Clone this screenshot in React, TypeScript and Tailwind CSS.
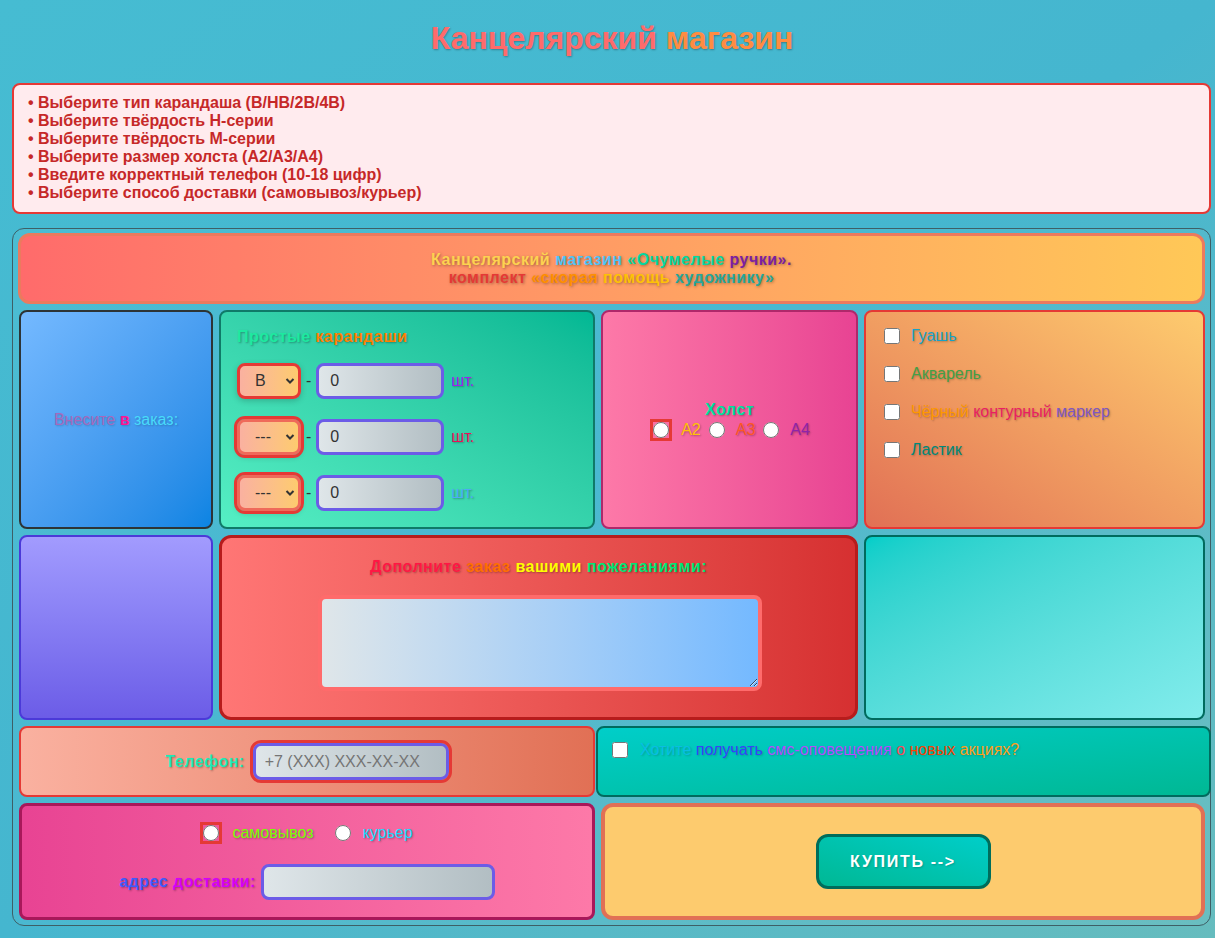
import React from 'react';

const shadow = '[text-shadow:1px_1px_2px_rgba(0,0,0,0.3)]';

const errors = [
  'Выберите тип карандаша (B/HB/2B/4B)',
  'Выберите твёрдость H-серии',
  'Выберите твёрдость M-серии',
  'Выберите размер холста (A2/A3/A4)',
  'Введите корректный телефон (10-18 цифр)',
  'Выберите способ доставки (самовывоз/курьер)',
];

function Pencil({ value, invalid, unitColor }: { value: string; invalid?: boolean; unitColor: string }) {
  return (
    <div className="flex items-center">
      <div className="relative">
        <select
          defaultValue={value}
          className={`appearance-none w-[64px] h-[36px] pl-[15px] text-[16px] text-[#333] rounded-lg border-[3px] bg-linear-to-r from-[#fab1a0] to-[#fdcb6e] shadow-[0_2px_6px_rgba(0,0,0,0.2)] ${
            invalid ? 'border-[#ef6a5a] outline-[3px] outline-solid outline-[#e53935]' : 'border-[#e53935]'
          }`}
        >
          <option value="---">---</option>
          <option value="B">B</option>
          <option value="HB">HB</option>
          <option value="2B">2B</option>
          <option value="4B">4B</option>
        </select>
        <svg className="absolute right-[6px] top-[13px] pointer-events-none" width="10" height="10" viewBox="0 0 10 10">
          <path d="M1.5 3 L5 6.5 L8.5 3" fill="none" stroke="#333" strokeWidth="2" />
        </svg>
      </div>
      <span className="mx-[5px] text-[#333]">-</span>
      <input
        defaultValue="0"
        className="w-[128px] h-[36px] pl-[11px] text-[16px] text-[#333] rounded-lg border-[3px] border-[#6c5ce7] bg-linear-to-r from-[#dfe6e9] to-[#b2bec3] outline-none"
      />
      <span className={`ml-[7px] ${shadow}`} style={{ color: unitColor }}>
        шт.
      </span>
    </div>
  );
}

function Radio({ boxed }: { boxed?: boolean }) {
  return (
    <input
      type="radio"
      name={boxed ? 'boxed' : undefined}
      className={`w-4 h-4 m-0 ${boxed ? 'outline-[3px] outline-solid outline-[#e53935]' : ''}`}
    />
  );
}

export default function App() {
  return (
    <div
      className="min-h-screen bg-linear-to-br from-[#46bcd2] via-[#45b6cf] to-[#66bcbe] pt-[19px] pb-[12px]"
      style={{ fontFamily: '"Liberation Sans", Arial, sans-serif' }}
    >
      <h1 className={`text-center pl-[9px] text-[32px] leading-[38px] font-bold ${shadow}`}>
        <span className="text-[#ff6b6b]">Канцелярский</span> <span className="text-[#ff8c42]">магазин</span>
      </h1>

      <div className="ml-[12px] mr-[4px] mt-[26px] rounded-lg border-2 border-[#e53935] bg-[#ffebee] pl-[14px] pt-[9px] pb-[10px] text-[16px] leading-[18px] font-bold text-[#c62828]">
        {errors.map((e) => (
          <div key={e}>• {e}</div>
        ))}
      </div>

      <div className="ml-[12px] mr-[4px] mt-[14px] rounded-xl border border-[#3e5f66] bg-white/[0.03] pl-[6px] pt-[4px] pb-[5px]">
        <div className="-ml-px w-[1187px] h-[71px] rounded-xl border-[3px] border-[#eb7a5e] bg-linear-to-r from-[#ff6b6b] to-[#ffc857] flex flex-col items-center justify-center text-[16px] leading-[18px] font-bold tracking-[0.5px] [text-shadow:1px_1px_3px_rgba(0,0,0,0.35)]">
          <div>
            <span className="text-[#fdd250]">Канцелярский</span> <span className="text-[#4fc3f7]">магазин</span>{' '}
            <span className="text-[#06d6a0]">«Очумелые</span> <span className="text-[#7b1fa2]">ручки»</span>
            <span className="text-[#7b1fa2]">.</span>
          </div>
          <div>
            <span className="text-[#e53935]">комплект</span> <span className="text-[#ff8f00]">«скорая</span>{' '}
            <span className="text-[#ffc107]">помощь</span> <span className="text-[#26a69a]">художнику»</span>
          </div>
        </div>

        <div className="mt-[6px] grid grid-cols-[194px_376px_257px_341px] grid-rows-[219px_185px_71px_117px] gap-[6px] text-[16px] leading-[18px]">
          {/* row 1 */}
          <div className="rounded-lg border-2 border-[#2d3436] bg-linear-to-br from-[#74b9ff] to-[#0984e3] flex items-center justify-center [text-shadow:1px_1px_2px_rgba(0,0,0,0.2)]">
            <span>
              <span className="text-[#a569bd]">Внесите</span> <span className="text-[#ff1493] font-bold">в</span>{' '}
              <span className="text-[#48dbfb]">заказ:</span>
            </span>
          </div>

          <div className="rounded-lg border-2 border-[#0f7a68] bg-linear-to-tr from-[#55efc4] to-[#00b894] pt-[16px] pl-[16px]">
            <div className={`font-bold tracking-[0.5px] ${shadow}`}>
              <span className="text-[#1de9a0]">Простые</span> <span className="text-[#ff7f00]">карандаши</span>
            </div>
            <div className="mt-[17px] flex flex-col gap-[20px]">
              <Pencil value="B" unitColor="#a020f0" />
              <Pencil value="---" invalid unitColor="#e9105a" />
              <Pencil value="---" invalid unitColor="#4fa8f7" />
            </div>
          </div>

          <div className="rounded-lg border-2 border-[#b0286a] bg-linear-to-r from-[#fd79a8] to-[#e84393] flex flex-col items-center justify-center">
            <div className={`font-bold tracking-[0.5px] text-[#00e0a0] ${shadow}`}>Холст</div>
            <div className={`mt-[2px] ml-[4px] flex items-center ${shadow}`}>
              <Radio boxed />
              <span className="ml-[12px] text-[#ffc107]">A2</span>
              <span className="ml-[8px] flex"><Radio /></span>
              <span className="ml-[11px] text-[#ff5722]">A3</span>
              <span className="ml-[8px] flex"><Radio /></span>
              <span className="ml-[11px] text-[#8e24aa]">A4</span>
            </div>
          </div>

          <div className="rounded-lg border-2 border-[#e53935] bg-linear-to-tr from-[#e17055] to-[#fdcb6e] pt-[15px] pl-[18px] flex flex-col gap-[20px] [text-shadow:1px_1px_2px_rgba(0,0,0,0.25)]">
            <label className="flex items-center gap-[11px]">
              <input type="checkbox" className="w-4 h-4 m-0" />
              <span className="text-[#17a2c8]">Гуашь</span>
            </label>
            <label className="flex items-center gap-[11px]">
              <input type="checkbox" className="w-4 h-4 m-0" />
              <span className="text-[#43a047]">Акварель</span>
            </label>
            <label className="flex items-center gap-[11px]">
              <input type="checkbox" className="w-4 h-4 m-0" />
              <span>
                <span className="text-[#ff9800]">Чёрный</span> <span className="text-[#e91e63]">контурный</span>{' '}
                <span className="text-[#7e57c2]">маркер</span>
              </span>
            </label>
            <label className="flex items-center gap-[11px]">
              <input type="checkbox" className="w-4 h-4 m-0" />
              <span className="text-[#00897b]">Ластик</span>
            </label>
          </div>

          {/* row 2 */}
          <div className="rounded-lg border-2 border-[#4b3ad8] bg-linear-to-b from-[#a29bfe] to-[#6c5ce7]" />

          <div className="col-span-2 rounded-xl border-[3px] border-[#b71c1c] bg-linear-to-r from-[#ff7675] to-[#d63031] flex flex-col items-center pt-[20px]">
            <div className={`font-bold tracking-[0.5px] ${shadow}`}>
              <span className="text-[#ff1744]">Дополните</span> <span className="text-[#ff6f00]">заказ</span>{' '}
              <span className="text-[#ffff00]">вашими</span> <span className="text-[#00e676]">пожеланиями:</span>
            </div>
            <textarea className="mt-[19px] ml-[2px] w-[444px] h-[96px] rounded-lg border-4 border-[#ff6b6b] bg-linear-to-r from-[#dfe6e9] to-[#74b9ff] outline-none" />
          </div>

          <div className="rounded-lg border-2 border-[#006b5e] bg-linear-to-br from-[#00cec9] to-[#81ecec]" />

          {/* row 3 */}
          <div className="col-span-2 rounded-lg border-2 border-[#e53935] bg-linear-to-r from-[#fab1a0] to-[#e17055] flex items-center justify-center gap-[8px]">
            <span className={`font-bold tracking-[0.5px] text-[#1de9b6] ${shadow}`}>Телефон:</span>
            <input
              placeholder="+7 (XXX) XXX-XX-XX"
              className="w-[196px] h-[37px] pl-[9px] text-[16px] rounded-lg border-[3px] border-[#6c5ce7] outline-[3px] outline-solid outline-[#e53935] bg-linear-to-r from-[#dfe6e9] to-[#b2bec3] placeholder:text-[#757575]"
            />
          </div>

          <div className="col-span-2 -ml-[5px] -mr-[6px] rounded-lg border-2 border-[#006b5e] bg-linear-to-br from-[#00cec9] to-[#00b894] pt-[13px] pl-[14px] flex items-start gap-[12px] [text-shadow:1px_1px_2px_rgba(0,0,0,0.2)]">
            <input type="checkbox" className="w-4 h-4 m-0 mt-[1px]" />
            <span>
              <span className="text-[#0abde3]">Хотите</span> <span className="text-[#3742fa]">получать</span>{' '}
              <span className="text-[#b44cff]">смс-оповещения</span> <span className="text-[#ff4757]">о</span>{' '}
              <span className="text-[#ff3f00]">новых</span> <span className="text-[#ff9f1a]">акциях?</span>
            </span>
          </div>

          {/* row 4 */}
          <div className="col-span-2 rounded-lg border-[3px] border-[#a8185a] bg-linear-to-r from-[#e84393] to-[#fd79a8] flex flex-col items-center justify-center gap-[21px]">
            <div className={`flex items-center mb-[1px] ml-[2px] ${shadow}`}>
              <Radio boxed />
              <span className="ml-[13px] text-[#76ff03]">самовывоз</span>
              <span className="ml-[21px] flex"><Radio /></span>
              <span className="ml-[12px] text-[#18dcff]">курьер</span>
            </div>
            <div className="flex items-center gap-[5px]">
              <span className={`font-bold tracking-[0.5px] ${shadow}`}>
                <span className="text-[#3d5afe]">адрес</span> <span className="text-[#d500f9]">доставки:</span>
              </span>
              <input className="w-[234px] h-[36px] rounded-lg border-[3px] border-[#6c5ce7] bg-linear-to-r from-[#dfe6e9] to-[#b2bec3] outline-none" />
            </div>
          </div>

          <div className="col-span-2 rounded-xl border-4 border-[#e17055] bg-[#fdcb6e] flex items-center justify-center">
            <button className="w-[175px] h-[55px] rounded-xl border-[3px] border-[#006d5b] bg-linear-to-tr from-[#00b894] to-[#00cec9] text-white font-bold text-[16px] tracking-[1.7px] [text-shadow:1px_1px_2px_rgba(0,0,0,0.2)]">
              КУПИТЬ --&gt;
            </button>
          </div>
        </div>
      </div>
    </div>
  );
}
